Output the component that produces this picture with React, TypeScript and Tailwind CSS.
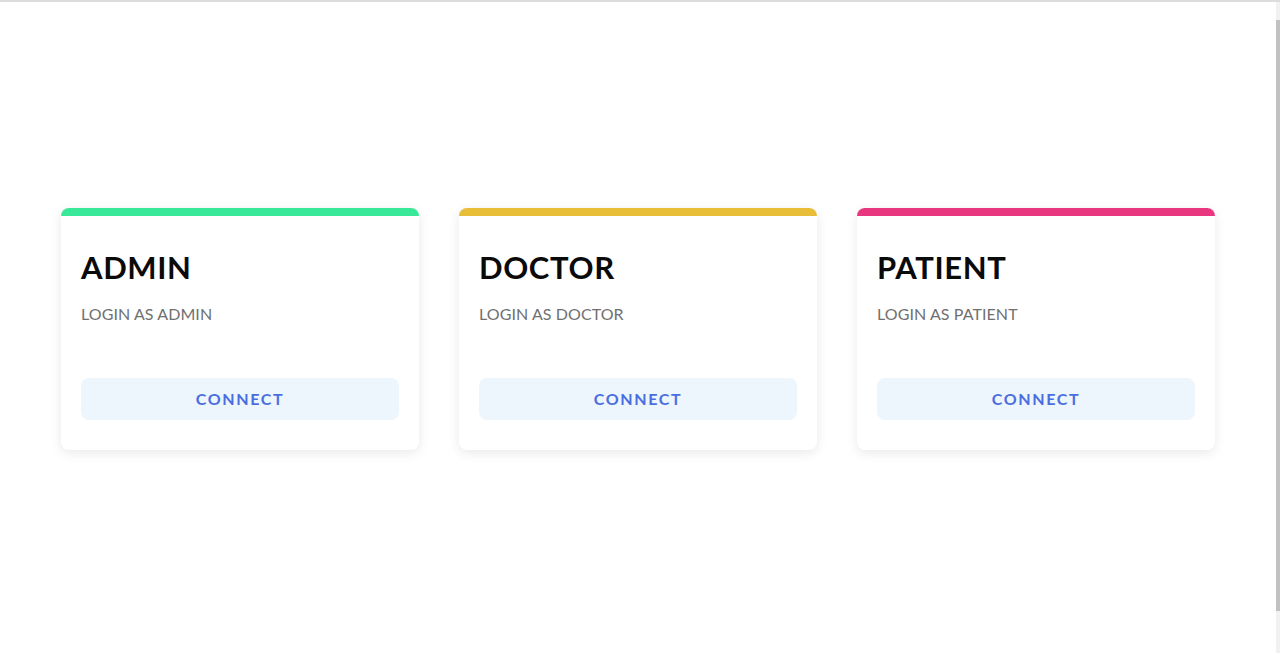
import React from 'react';

interface Role {
  title: string;
  subtitle: string;
  bar: string;
}

const roles: Role[] = [
  { title: 'ADMIN', subtitle: 'LOGIN AS ADMIN', bar: 'bg-[#3ae89a]' },
  { title: 'DOCTOR', subtitle: 'LOGIN AS DOCTOR', bar: 'bg-[#e8bd38]' },
  { title: 'PATIENT', subtitle: 'LOGIN AS PATIENT', bar: 'bg-[#e8367f]' },
];

const App: React.FC = () => {
  return (
    <div className="h-[653px] w-full overflow-hidden bg-white border-t-2 border-[#dcdcdc] flex font-['Lato',sans-serif]">
      <main className="flex-1 pt-[206px]">
        <div className="flex justify-center gap-10">
          {roles.map((role) => (
            <div
              key={role.title}
              className="w-[358px] bg-white rounded-lg overflow-hidden shadow-[0_3px_12px_rgba(0,0,0,0.09)]"
            >
              <div className={`h-2 ${role.bar}`} />
              <div className="px-5 pt-8 pb-[30px]">
                <h2 className="pt-px text-[31px] leading-9 tracking-[0.02em] font-bold text-[#0a0a0a]">{role.title}</h2>
                <p className="mt-[17px] text-base leading-6 text-[#707070] tracking-[0.005em]">{role.subtitle}</p>
                <button className="mt-[52px] w-full h-[42px] rounded-lg bg-[#edf5fd] text-[#4a6ee0] text-base font-bold tracking-[0.1em]">
                  CONNECT
                </button>
              </div>
            </div>
          ))}
        </div>
      </main>
      {/* scrollbar strip */}
      <div className="w-[4px] bg-[#f1f1f1] flex flex-col pt-[18px] pb-[42px]">
        <div className="flex-1 bg-[#c1c1c1]" />
      </div>
    </div>
  );
};

export default App;
